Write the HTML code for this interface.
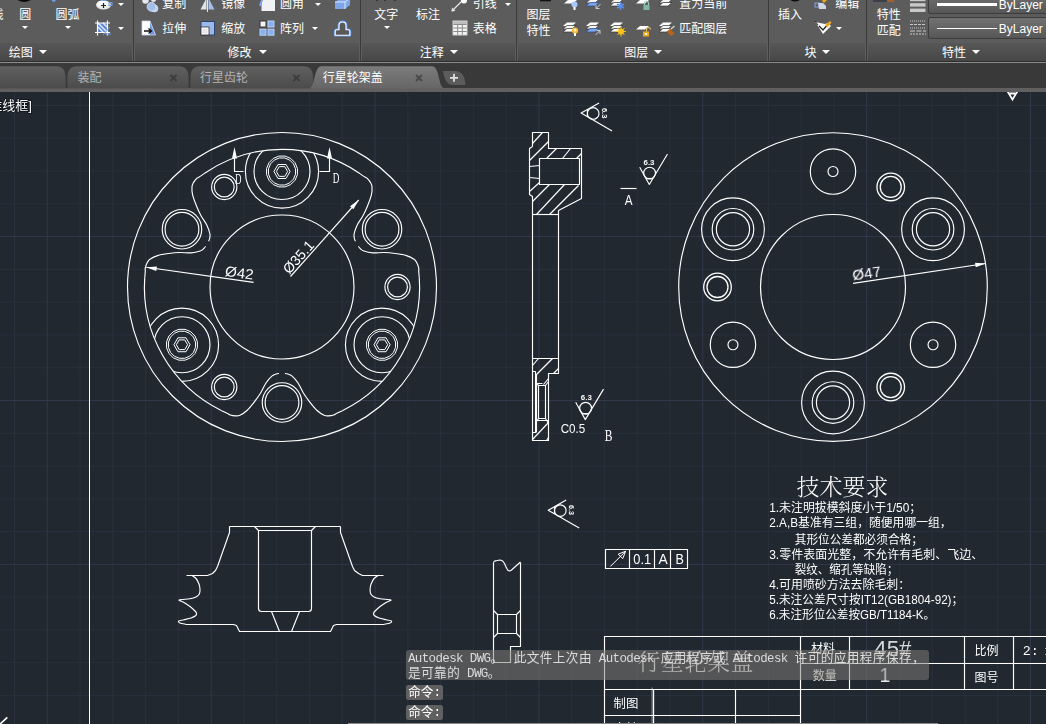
<!DOCTYPE html>
<html lang="zh"><head><meta charset="utf-8"><title>AutoCAD</title>
<style>
html,body{margin:0;padding:0;width:1046px;height:724px;overflow:hidden;background:#212830;font-family:"Liberation Sans","Noto Sans CJK SC",sans-serif}
#dwg{position:absolute;left:0;top:0}
#ribbon{position:absolute;left:0;top:0;width:1046px;height:62px;background:#5c5c5c;overflow:hidden}
#ribbon .ttl{position:absolute;left:0;top:43px;width:1046px;height:18px;background:linear-gradient(#575757,#474747)}
#ribbon .edge{position:absolute;left:0;top:61px;width:1046px;height:1px;background:#2e2e2e}
.t{position:absolute;color:#fff;font-size:12px;line-height:14px;white-space:nowrap}
.sep{position:absolute;top:0;width:1px;height:61px;background:#3a3a3a}
.sep:after{content:'';position:absolute;left:-1px;top:43px;width:3px;height:18px;border-left:1px solid #5f5f5f;border-right:1px solid #5f5f5f;box-sizing:border-box}
.ar{position:absolute;width:0;height:0;border-left:3px solid transparent;border-right:3px solid transparent;border-top:3.5px solid #fff}
#gap{position:absolute;left:0;top:62px;width:1046px;height:30px;background:#393939}
#gap .hl{position:absolute;left:0;top:0;width:1046px;height:1.3px;background:#8c8c8c}
#gap .base{position:absolute;left:0;top:26px;width:1046px;height:4px;background:#606060}
.tab{position:absolute;top:4px;height:22px;border-radius:9px 9px 0 0;background:linear-gradient(#5b5b5b,#4a4a4a);color:#b4b4b4;font-size:12px;line-height:22px}
.tab.on{background:#666;color:#fff}
.tab span{position:absolute;top:0}
.tab .x{font-size:10px;color:#8a8a8a;font-weight:bold}
.tab.on .x{color:#aaa}
.ico{position:absolute}
#cmd1{position:absolute;left:406px;top:650px;width:523px;height:29.5px;background:rgba(131,126,121,.53);border-radius:3px}
.cl{position:absolute;left:408px;color:#dcdcdc;font-family:"Liberation Mono","Noto Sans CJK SC",monospace;font-size:12.5px;letter-spacing:-0.63px;line-height:14px;white-space:pre}
.cl b{font-weight:normal;font-size:12.6px;letter-spacing:0.45px}
.cl i{margin-left:-3.6px}
.cp{position:absolute;left:406px;width:37px;height:14.8px;background:rgba(101,101,101,.93);border-radius:2.5px;color:#fff;font-family:"Liberation Mono","Noto Sans CJK SC",monospace;font-size:12.6px;line-height:14px}
.cp span{position:absolute;left:2.2px;top:1.2px}
#hscroll{position:absolute;left:347.5px;top:723px;width:590.5px;height:1px;background:#8a8a8a}
.dd{position:absolute;left:928px;width:130px;background:linear-gradient(#727272,#575757);border:1px solid #3c3c3c;border-radius:2px;box-shadow:inset 0 1px 0 #6c6c6c}
.dd .ln{position:absolute;left:8px;width:59.5px;background:#fff}
.ar2{position:absolute;width:0;height:0;border-left:4px solid transparent;border-right:4px solid transparent;border-top:4.2px solid #fff}

</style></head><body>
<svg id="dwg" width="1046" height="724" viewBox="0 0 1046 724">
<rect x="0" y="0" width="1046" height="724" fill="#212830"/>
<path d="M14.5 92V724M80.05 92V724M112.82 92V724M145.6 92V724M178.38 92V724M243.93 92V724M276.7 92V724M309.47 92V724M342.25 92V724M407.8 92V724M440.57 92V724M473.35 92V724M506.12 92V724M571.67 92V724M604.45 92V724M637.22 92V724M670 92V724M735.55 92V724M768.32 92V724M801.1 92V724M833.87 92V724M899.42 92V724M932.2 92V724M964.97 92V724M997.75 92V724M0 105.5H1046M0 138.28H1046M0 171.05H1046M0 203.83H1046M0 269.38H1046M0 302.15H1046M0 334.92H1046M0 367.7H1046M0 433.25H1046M0 466.02H1046M0 498.8H1046M0 531.57H1046M0 597.12H1046M0 629.9H1046M0 662.67H1046M0 695.45H1046" stroke="#29303d" stroke-width="1" fill="none"/>
<path d="M47.27 92V724M211.15 92V724M375.02 92V724M538.9 92V724M702.77 92V724M866.65 92V724M1030.52 92V724M0 236.6H1046M0 400.47H1046M0 564.35H1046" stroke="#31394b" stroke-width="1" fill="none"/>
<g fill="none" stroke="#fff" stroke-width="1.15" stroke-linecap="butt" stroke-linejoin="round">
<circle cx="282" cy="287" r="154.5"/>
<circle cx="282" cy="287" r="72"/>
<path d="M205.06 172.92C204.24 173.5 201.49 175.51 200.15 176.39C198.81 177.27 198.09 177.2 197 178.2C195.91 179.2 194.43 181.02 193.6 182.4C192.77 183.78 192.17 184.42 192 186.5C191.83 188.58 191.87 191.7 192.6 194.9C193.33 198.1 195.02 202.27 196.4 205.7C197.78 209.13 199.13 212.22 200.9 215.5C202.67 218.78 205.5 222.32 207 225.4C208.5 228.48 209.47 231.82 209.9 234C210.33 236.18 209.82 237.3 209.6 238.5C209.38 239.7 208.77 240.75 208.6 241.2"/>
<path d="M144.74 277.4C144.83 276.41 145.19 273.03 145.28 271.42C145.37 269.82 144.95 269.23 145.28 267.79C145.6 266.34 146.43 264.16 147.21 262.74C148 261.33 148.24 260.49 149.96 259.31C151.69 258.12 154.4 256.59 157.54 255.63C160.68 254.66 165.13 254.04 168.79 253.52C172.46 253 175.8 252.63 179.53 252.52C183.26 252.4 187.73 253.09 191.15 252.85C194.57 252.61 197.94 251.78 200.05 251.06C202.16 250.34 202.87 249.34 203.8 248.55C204.73 247.76 205.33 246.7 205.64 246.33"/>
<path d="M205.06 172.92A137.6 137.6 0 0 1 358.94 172.92"/>
<path d="M221.68 410.67C222.59 411.09 225.7 412.46 227.13 413.19C228.56 413.91 228.86 414.57 230.28 415.01C231.69 415.46 234 415.83 235.61 415.86C237.23 415.89 238.08 416.09 239.96 415.19C241.85 414.29 244.53 412.71 246.94 410.47C249.34 408.24 252.11 404.7 254.39 401.78C256.67 398.87 258.67 396.16 260.63 392.98C262.59 389.81 264.23 385.59 266.15 382.75C268.07 379.91 270.48 377.41 272.15 375.94C273.82 374.47 275.05 374.36 276.2 373.95C277.35 373.54 278.56 373.55 279.04 373.47"/>
<path d="M342.32 410.67C341.41 411.09 338.3 412.46 336.87 413.19C335.44 413.91 335.14 414.57 333.72 415.01C332.31 415.46 330 415.83 328.39 415.86C326.77 415.89 325.92 416.09 324.04 415.19C322.15 414.29 319.47 412.71 317.06 410.47C314.66 408.24 311.89 404.7 309.61 401.78C307.33 398.87 305.33 396.16 303.37 392.98C301.41 389.81 299.77 385.59 297.85 382.75C295.93 379.91 293.52 377.41 291.85 375.94C290.18 374.47 288.95 374.36 287.8 373.95C286.65 373.54 285.44 373.55 284.96 373.47"/>
<path d="M221.68 410.67A137.6 137.6 0 0 1 144.74 277.4"/>
<path d="M419.26 277.4C419.17 276.41 418.81 273.03 418.72 271.42C418.63 269.82 419.05 269.23 418.72 267.79C418.4 266.34 417.57 264.16 416.79 262.74C416 261.33 415.76 260.49 414.04 259.31C412.31 258.12 409.6 256.59 406.46 255.63C403.32 254.66 398.87 254.04 395.21 253.52C391.54 253 388.2 252.63 384.47 252.52C380.74 252.4 376.27 253.09 372.85 252.85C369.43 252.61 366.06 251.78 363.95 251.06C361.84 250.34 361.13 249.34 360.2 248.55C359.27 247.76 358.67 246.7 358.36 246.33"/>
<path d="M358.94 172.92C359.76 173.5 362.51 175.51 363.85 176.39C365.19 177.27 365.91 177.2 367 178.2C368.09 179.2 369.57 181.02 370.4 182.4C371.23 183.78 371.83 184.42 372 186.5C372.17 188.58 372.13 191.7 371.4 194.9C370.67 198.1 368.98 202.27 367.6 205.7C366.22 209.13 364.87 212.22 363.1 215.5C361.33 218.78 358.5 222.32 357 225.4C355.5 228.48 354.53 231.82 354.1 234C353.67 236.18 354.18 237.3 354.4 238.5C354.62 239.7 355.23 240.75 355.4 241.2"/>
<path d="M419.26 277.4A137.6 137.6 0 0 1 342.32 410.67"/>
<clipPath id="cf"><circle cx="282" cy="287" r="137.6"/></clipPath>
<g clip-path="url(#cf)">
<circle cx="282" cy="171.5" r="36.6"/>
<circle cx="282" cy="171.5" r="28"/>
<circle cx="181.97" cy="344.75" r="36.6"/>
<circle cx="181.97" cy="344.75" r="28"/>
<circle cx="382.03" cy="344.75" r="36.6"/>
<circle cx="382.03" cy="344.75" r="28"/>
</g>
<path d="M297.41 168.44L295.06 162.77L290.73 158.44L285.06 156.09L278.94 156.09L273.27 158.44L268.94 162.77L266.59 168.44L266.59 174.56L268.94 180.23L273.27 184.56L278.94 186.91L285.06 186.91L290.73 184.56L295.06 180.23L297.41 174.56Z" stroke-linejoin="round" stroke-width="1"/>
<path d="M295.51 168.81L293.45 163.85L289.65 160.05L284.69 157.99L279.31 157.99L274.35 160.05L270.55 163.85L268.49 168.81L268.49 174.19L270.55 179.15L274.35 182.95L279.31 185.01L284.69 185.01L289.65 182.95L293.45 179.15L295.51 174.19Z" stroke-linejoin="round" stroke-width="1"/>
<path d="M290.06 171.5L286.03 164.52L277.97 164.52L273.94 171.5L277.97 178.48L286.03 178.48Z" stroke-linejoin="round" stroke-width="1"/>
<path d="M287.62 171.5L284.81 166.63L279.19 166.63L276.38 171.5L279.19 176.37L284.81 176.37Z" stroke-linejoin="round" stroke-width="1"/>
<circle cx="382.03" cy="229.25" r="19.75"/>
<circle cx="382.03" cy="229.25" r="16.9"/>
<circle cx="397.5" cy="287" r="12.6"/>
<circle cx="397.5" cy="287" r="9.9"/>
<path d="M197.38 341.69L195.03 336.02L190.7 331.69L185.04 329.34L178.91 329.34L173.25 331.69L168.91 336.02L166.57 341.69L166.57 347.81L168.91 353.48L173.25 357.81L178.91 360.16L185.04 360.16L190.7 357.81L195.03 353.48L197.38 347.81Z" stroke-linejoin="round" stroke-width="1"/>
<path d="M195.48 342.06L193.42 337.1L189.62 333.3L184.66 331.24L179.29 331.24L174.32 333.3L170.52 337.1L168.47 342.06L168.47 347.44L170.52 352.4L174.32 356.2L179.29 358.26L184.66 358.26L189.62 356.2L193.42 352.4L195.48 347.44Z" stroke-linejoin="round" stroke-width="1"/>
<path d="M190.03 344.75L186 337.77L177.95 337.77L173.92 344.75L177.95 351.73L186 351.73Z" stroke-linejoin="round" stroke-width="1"/>
<path d="M187.59 344.75L184.78 339.88L179.17 339.88L176.36 344.75L179.17 349.62L184.78 349.62Z" stroke-linejoin="round" stroke-width="1"/>
<circle cx="181.97" cy="229.25" r="19.75"/>
<circle cx="181.97" cy="229.25" r="16.9"/>
<circle cx="224.25" cy="186.97" r="12.6"/>
<circle cx="224.25" cy="186.97" r="9.9"/>
<path d="M397.43 341.69L395.09 336.02L390.75 331.69L385.09 329.34L378.96 329.34L373.3 331.69L368.97 336.02L366.62 341.69L366.62 347.81L368.97 353.48L373.3 357.81L378.96 360.16L385.09 360.16L390.75 357.81L395.09 353.48L397.43 347.81Z" stroke-linejoin="round" stroke-width="1"/>
<path d="M395.53 342.06L393.48 337.1L389.68 333.3L384.71 331.24L379.34 331.24L374.38 333.3L370.58 337.1L368.52 342.06L368.52 347.44L370.58 352.4L374.38 356.2L379.34 358.26L384.71 358.26L389.68 356.2L393.48 352.4L395.53 347.44Z" stroke-linejoin="round" stroke-width="1"/>
<path d="M390.08 344.75L386.05 337.77L378 337.77L373.97 344.75L378 351.73L386.05 351.73Z" stroke-linejoin="round" stroke-width="1"/>
<path d="M387.64 344.75L384.83 339.88L379.22 339.88L376.41 344.75L379.22 349.62L384.83 349.62Z" stroke-linejoin="round" stroke-width="1"/>
<circle cx="282" cy="402.5" r="19.75"/>
<circle cx="282" cy="402.5" r="16.9"/>
<circle cx="224.25" cy="387.03" r="12.6"/>
<circle cx="224.25" cy="387.03" r="9.9"/>
<path d="M234.5 150.5V171.5H243.5"/>
<path d="M234.5 146.9L237 158.6L232 158.6Z" fill="#fff" stroke="none"/>
<path d="M329.5 150.5V171.5H319.5"/>
<path d="M329.5 146.9L332 158.6L327 158.6Z" fill="#fff" stroke="none"/>
<path d="M146.2 267.3L253.6 282.4"/>
<path d="M146.2 267.3L156.92 266.48L156.28 271.04Z" fill="#fff" stroke="none"/>
<path d="M358.7 200L290.5 276.5"/>
<path d="M358.7 200L353.43 209.37L350 206.31Z" fill="#fff" stroke="none"/>
<circle cx="833" cy="287" r="154.3"/>
<circle cx="833" cy="287" r="72.5"/>
<circle cx="833" cy="171.5" r="22.7"/>
<circle cx="833" cy="171.5" r="5"/>
<circle cx="933.03" cy="229.25" r="31.4"/>
<circle cx="933.03" cy="229.25" r="20.8"/>
<circle cx="933.03" cy="229.25" r="16.6"/>
<circle cx="890.75" cy="186.97" r="13.8" stroke-width="1.3"/>
<circle cx="890.75" cy="186.97" r="10.5" stroke-width="1.3"/>
<circle cx="732.97" cy="344.75" r="22.7"/>
<circle cx="732.97" cy="344.75" r="5"/>
<circle cx="732.97" cy="229.25" r="31.4"/>
<circle cx="732.97" cy="229.25" r="20.8"/>
<circle cx="732.97" cy="229.25" r="16.6"/>
<circle cx="717.5" cy="287" r="13.8" stroke-width="1.3"/>
<circle cx="717.5" cy="287" r="10.5" stroke-width="1.3"/>
<circle cx="933.03" cy="344.75" r="22.7"/>
<circle cx="933.03" cy="344.75" r="5"/>
<circle cx="833" cy="402.5" r="31.4"/>
<circle cx="833" cy="402.5" r="20.8"/>
<circle cx="833" cy="402.5" r="16.6"/>
<circle cx="890.75" cy="387.03" r="13.8" stroke-width="1.3"/>
<circle cx="890.75" cy="387.03" r="10.5" stroke-width="1.3"/>
<path d="M985.8 263.5L853 283.4"/>
<path d="M985.8 263.5L975.76 267.33L975.08 262.78Z" fill="#fff" stroke="none"/>
<path d="M532.5 146.5V132.5H548.5V148.5H581.5V198.5L558.5 210.5V358.5"/>
<path d="M532.5 146.5L529.5 148.5V194.5L532.5 196.5V440.5H548.5V373.5H558.5V358.5H532.5"/>
<path d="M532.5 214.5L558.5 214.5"/>
<path d="M539.5 158.5H579.5V184.5H539.5Z"/>
<path d="M576.5 158.5L581.5 153.5"/>
<path d="M529.5 166.5L539.5 165.5"/>
<path d="M529.5 177.5L539.5 178.5"/>
<path d="M532.5 143.5L542.5 132.5"/>
<path d="M529.5 160.5L548.5 141.5"/>
<path d="M546.5 158.5L556.5 148.5"/>
<path d="M562.5 158.5L570.5 148.5"/>
<path d="M529.5 191.5L539.5 182.5"/>
<path d="M532.5 201.5L549.5 184.5"/>
<path d="M536.5 214.5L564.5 184.5"/>
<path d="M549.5 214.5L578.5 185.5"/>
<path d="M532.5 371.5H535.5V432.5H532.5"/>
<path d="M536.5 374.5V432.5"/>
<path d="M538.5 385.5H545.5V418.5H538.5Z"/>
<path d="M536.5 383.5L538.5 385.5M548.5 381.5L545.5 385.5M536.5 383.5H542.5"/>
<path d="M536.5 421.5L538.5 418.5M548.5 423.5L545.5 418.5M536.5 420.5H548.5"/>
<path d="M532.5 365.5L538.5 358.5"/>
<path d="M535.5 375.5L552.5 358.5"/>
<path d="M543.5 384.5L548.5 378.5"/>
<path d="M553.5 373.5L558.5 368.5"/>
<path d="M532.5 439.5L548.5 422.5"/>
<path d="M546.5 440.5L548.5 437.5"/>
<path d="M620.5 188.5L636.5 188.5"/>
<path d="M639.7 167.2L649.3 184.5L667.5 154"/>
<circle cx="649.6" cy="173.1" r="5.9"/>
<path d="M646.1 178.5L652.7 178.5"/>
<path d="M575.7 402.3L585.3 419.6L603.5 389.1"/>
<circle cx="585.6" cy="408.2" r="5.9"/>
<path d="M582.1 413.6L588.7 413.6"/>
<path d="M599.1 102.9L581.1 113.1L612.1 130.9"/>
<circle cx="593.2" cy="113.4" r="5.8"/>
<path d="M587.4 109.5L587.4 116.7"/>
<path d="M566.2 500.1L548.2 510.3L579.2 528.1"/>
<circle cx="560.3" cy="510.6" r="5.8"/>
<path d="M554.5 506.7L554.5 513.9"/>
<path d="M605.5 549.5H687.5V568.5H605.5Z"/>
<path d="M629.5 549.5L629.5 568.5"/>
<path d="M654.5 549.5L654.5 568.5"/>
<path d="M670.5 549.5L670.5 568.5"/>
<path d="M610.3 566.5L625.6 551.2M625.6 551.2L618.2 554.2L622.8 558.6Z" stroke-width="1"/>
<path d="M229.5 526.5L229.5 532.5L217.5 566.5L215.5 570.5L212.5 573.5L207.5 575.5L186.5 575.5"/>
<path d="M340.5 526.5L340.5 532.5L352.5 566.5L354.5 570.5L358.5 573.5L362.5 575.5L383.5 575.5"/>
<path d="M229.5 526.5L340.5 526.5"/>
<path d="M191.5 575.3C192.25 575.83 194.75 577.05 196 578.5C197.25 579.95 198.33 582.17 199 584C199.67 585.83 199.95 587.83 200 589.5C200.05 591.17 199.97 592.75 199.3 594C198.63 595.25 197.55 596.2 196 597C194.45 597.8 192.8 598.32 190 598.8C187.2 599.28 180.2 599.28 179.2 599.9C178.2 600.52 182.2 601.4 184 602.5C185.8 603.6 188.17 605.08 190 606.5C191.83 607.92 193.9 609.83 195 611C196.1 612.17 196.52 612.7 196.6 613.5C196.68 614.3 196.43 615.05 195.5 615.8C194.57 616.55 192.92 617.33 191 618C189.08 618.67 186.05 619.3 184 619.8C181.95 620.3 179.37 620.47 178.7 621C178.03 621.53 178.8 622.45 180 623C181.2 623.55 184.92 624.08 185.9 624.3"/>
<path d="M378.6 575.3C377.85 575.83 375.35 577.05 374.1 578.5C372.85 579.95 371.77 582.17 371.1 584C370.43 585.83 370.15 587.83 370.1 589.5C370.05 591.17 370.13 592.75 370.8 594C371.47 595.25 372.55 596.2 374.1 597C375.65 597.8 377.3 598.32 380.1 598.8C382.9 599.28 389.9 599.28 390.9 599.9C391.9 600.52 387.9 601.4 386.1 602.5C384.3 603.6 381.93 605.08 380.1 606.5C378.27 607.92 376.2 609.83 375.1 611C374 612.17 373.58 612.7 373.5 613.5C373.42 614.3 373.67 615.05 374.6 615.8C375.53 616.55 377.18 617.33 379.1 618C381.02 618.67 384.05 619.3 386.1 619.8C388.15 620.3 390.73 620.47 391.4 621C392.07 621.53 391.3 622.45 390.1 623C388.9 623.55 385.18 624.08 384.2 624.3"/>
<path d="M185.5 624.5L233.5 624.5L236.5 625.5L239.5 631.5L330.5 631.5L333.5 625.5L336.5 624.5L384.5 624.5"/>
<path d="M254.5 526.5L258.5 530.5H311.5L315.5 526.5"/>
<path d="M258.5 530.5V608.5Q258.5 611.5 261.5 611.5H308.5Q311.5 611.5 311.5 608.5V530.5"/>
<path d="M271.5 611.5L279.5 631.5M299.5 611.5L291.5 631.5"/>
<path d="M493.5 562.5V662.5H510.5V646.5H520.5V562.5"/>
<path d="M497.5 614.5H516.5V633.5H497.5Z"/>
<path d="M493.5 610.5L497.5 614.5M520.5 610.5L516.5 614.5M493.5 637.5L497.5 633.5M520.5 637.5L516.5 633.5"/>
<path d="M493.5 562.5C493.62 562.32 493.8 561.68 494.2 561.4C494.6 561.12 495.18 561 495.9 560.8C496.62 560.6 497.63 560.28 498.5 560.2C499.37 560.12 500.32 560.07 501.1 560.3C501.88 560.53 502.58 560.95 503.2 561.6C503.82 562.25 504.28 563.22 504.8 564.2C505.32 565.18 505.83 566.57 506.3 567.5C506.77 568.43 507.17 569.27 507.6 569.8C508.03 570.33 508.47 570.55 508.9 570.7C509.33 570.85 509.77 570.82 510.2 570.7C510.63 570.58 511.28 570.12 511.5 570L520.5 562"/>
<path d="M1046 636.5H604.5V724"/>
<path d="M604.5 689.5L1046 689.5"/>
<path d="M800.5 663.5L1046 663.5"/>
<path d="M800.5 636.5L800.5 724"/>
<path d="M849.5 636.5L849.5 689.5"/>
<path d="M964.5 636.5L964.5 689.5"/>
<path d="M1013.5 636.5L1013.5 689.5"/>
<path d="M653.6 689.5L653.6 724"/>
<path d="M652.2 687.5L652.2 724" stroke-width="1.6" opacity=".35"/>
<path d="M735.5 689.5L735.5 724"/>
<path d="M604.5 715.5L800.5 715.5"/>
<rect x="89" y="92" width="1" height="632" fill="#fff" stroke="none"/>
<path d="M-1 725L7.3 717.3" stroke-width="1.7"/>
<path d="M1007.3 91L1012.5 99.6L1017.6 91M1009.8 93.5H1015.2" stroke-width="1.8" stroke-linejoin="miter"/>
</g>
<g fill="#fff" stroke="none" opacity="0.999">
<text x="32" y="109.7" font-size="13" font-family="Liberation Sans,Noto Sans CJK SC,sans-serif" text-anchor="end" stroke="#10141a" stroke-width="1.6" paint-order="stroke" stroke-linejoin="round">[-][俯视][二维线框]</text>
<text x="235.2" y="183.9" font-size="15" font-family="Liberation Serif,Noto Serif CJK SC,serif" textLength="6.2" lengthAdjust="spacingAndGlyphs" >D</text>
<text x="332.8" y="183.2" font-size="15" font-family="Liberation Serif,Noto Serif CJK SC,serif" textLength="6.6" lengthAdjust="spacingAndGlyphs" >D</text>
<text x="624.8" y="205" font-size="14.6" font-family="Liberation Sans,Noto Sans CJK SC,sans-serif" textLength="7.8" lengthAdjust="spacingAndGlyphs" >A</text>
<text x="604.8" y="441.1" font-size="17.3" font-family="Liberation Serif,Noto Serif CJK SC,serif" textLength="7.7" lengthAdjust="spacingAndGlyphs" >B</text>
<text x="560.7" y="432.8" font-size="12.2" font-family="Liberation Sans,Noto Sans CJK SC,sans-serif" textLength="24.6" lengthAdjust="spacingAndGlyphs" >C0.5</text>
<text x="643.5" y="164.6" font-size="7.5" font-family="Liberation Sans,Noto Sans CJK SC,sans-serif" font-weight="bold" textLength="11" lengthAdjust="spacingAndGlyphs">6.3</text>
<text x="580.8" y="399.5" font-size="7.5" font-family="Liberation Sans,Noto Sans CJK SC,sans-serif" font-weight="bold" textLength="11" lengthAdjust="spacingAndGlyphs">6.3</text>
<text transform="translate(601.7,107.9) rotate(90)" font-weight="bold" font-size="7" font-family="Liberation Sans,Noto Sans CJK SC,sans-serif" textLength="10.5" lengthAdjust="spacingAndGlyphs">6.3</text>
<text transform="translate(568.9,505) rotate(90)" font-weight="bold" font-size="7" font-family="Liberation Sans,Noto Sans CJK SC,sans-serif" textLength="10" lengthAdjust="spacingAndGlyphs">6.3</text>
<text transform="translate(224.6,275.8) rotate(8)" font-size="14.3" font-family="Liberation Sans,Noto Sans CJK SC,sans-serif" textLength="28.6" lengthAdjust="spacingAndGlyphs">Ø42</text>
<text transform="translate(289.3,274.7) rotate(-48.3)" font-size="14.3" font-family="Liberation Sans,Noto Sans CJK SC,sans-serif" textLength="38.5" lengthAdjust="spacingAndGlyphs">Ø35.1</text>
<text transform="translate(853.2,280.5) rotate(-8.5)" font-size="14.3" font-family="Liberation Sans,Noto Sans CJK SC,sans-serif" textLength="28.6" lengthAdjust="spacingAndGlyphs">Ø47</text>
<text x="633.3" y="564.4" font-size="13.8" font-family="Liberation Sans,Noto Sans CJK SC,sans-serif" textLength="17.8" lengthAdjust="spacingAndGlyphs" >0.1</text>
<text x="658.6" y="564.4" font-size="13.8" font-family="Liberation Sans,Noto Sans CJK SC,sans-serif" textLength="9.2" lengthAdjust="spacingAndGlyphs" >A</text>
<text x="675.6" y="564.4" font-size="13.8" font-family="Liberation Sans,Noto Sans CJK SC,sans-serif" textLength="8.4" lengthAdjust="spacingAndGlyphs" >B</text>
<text x="796.6" y="495" font-size="23" font-family="Liberation Serif,Noto Serif CJK SC,serif" textLength="92" lengthAdjust="spacingAndGlyphs" font-weight="300">技术要求</text>
<text x="769.2" y="512.2" font-size="12" font-family="Liberation Sans,Noto Sans CJK SC,sans-serif" textLength="152.0" lengthAdjust="spacingAndGlyphs" font-weight="400">1.未注明拔模斜度小于1/50；</text>
<text x="769.2" y="527.2" font-size="12" font-family="Liberation Sans,Noto Sans CJK SC,sans-serif" textLength="182.5" lengthAdjust="spacingAndGlyphs" font-weight="400">2.A,B基准有三组，随便用哪一组，</text>
<text x="794.8" y="543.6" font-size="12" font-family="Liberation Sans,Noto Sans CJK SC,sans-serif" textLength="128.0" lengthAdjust="spacingAndGlyphs" font-weight="400">其形位公差都必须合格；</text>
<text x="769.2" y="558.7" font-size="12" font-family="Liberation Sans,Noto Sans CJK SC,sans-serif" textLength="214.0" lengthAdjust="spacingAndGlyphs" font-weight="400">3.零件表面光整，不允许有毛刺、飞边、</text>
<text x="794.8" y="573.7" font-size="12" font-family="Liberation Sans,Noto Sans CJK SC,sans-serif" textLength="103.5" lengthAdjust="spacingAndGlyphs" font-weight="400">裂纹、缩孔等缺陷；</text>
<text x="769.2" y="589.0" font-size="12" font-family="Liberation Sans,Noto Sans CJK SC,sans-serif" textLength="141.0" lengthAdjust="spacingAndGlyphs" font-weight="400">4.可用喷砂方法去除毛刺：</text>
<text x="769.2" y="603.9" font-size="12" font-family="Liberation Sans,Noto Sans CJK SC,sans-serif" textLength="194.0" lengthAdjust="spacingAndGlyphs" font-weight="400">5.未注公差尺寸按IT12(GB1804-92)；</text>
<text x="769.2" y="618.9" font-size="12" font-family="Liberation Sans,Noto Sans CJK SC,sans-serif" textLength="166.0" lengthAdjust="spacingAndGlyphs" font-weight="400">6.未注形位公差按GB/T1184-K。</text>
<text x="637.8" y="670" font-size="22.5" font-family="Liberation Serif,Noto Serif CJK SC,serif" font-weight="300" textLength="115.5" lengthAdjust="spacing" opacity=".92">行星轮架盖</text>
<text x="811" y="653.2" font-size="12" font-family="Liberation Sans,Noto Sans CJK SC,sans-serif">材料</text>
<text x="812.8" y="680.4" font-size="12" font-family="Liberation Sans,Noto Sans CJK SC,sans-serif">数量</text>
<text x="874.3" y="656.4" font-size="21.5" font-family="Liberation Sans,Noto Sans CJK SC,sans-serif" textLength="37" lengthAdjust="spacingAndGlyphs" font-weight="300" opacity=".82">45#</text>
<text x="879.5" y="682.2" font-size="19.5" font-family="Liberation Sans,Noto Sans CJK SC,sans-serif" opacity=".9">1</text>
<text x="974.6" y="654.8" font-size="12" font-family="Liberation Sans,Noto Sans CJK SC,sans-serif">比例</text>
<text x="974.6" y="681.8" font-size="12" font-family="Liberation Sans,Noto Sans CJK SC,sans-serif">图号</text>
<text x="1022.8" y="655.2" font-size="13.4" font-family="Liberation Mono,Noto Sans CJK SC,monospace">2:</text>
<text x="1044.4" y="655.2" font-size="13.4" font-family="Liberation Mono,Noto Sans CJK SC,monospace">1</text>
<text x="613.6" y="708.2" font-size="12.4" font-family="Liberation Sans,Noto Sans CJK SC,sans-serif">制图</text>
<text x="613.6" y="733.4" font-size="12.4" font-family="Liberation Sans,Noto Sans CJK SC,sans-serif">审核</text>
</g>
</svg>
<div id="ribbon"><div class="ttl"></div><div class="edge"></div>
<div class="t" style="left:-20.5px;top:7.9px">直线</div>
<div class="t" style="left:19.2px;top:7.9px">圆</div>
<div class="ar" style="left:22.4px;top:25.8px"></div>
<div class="t" style="left:55.4px;top:7.9px">圆弧</div>
<div class="ar" style="left:64.5px;top:25.8px"></div>
<svg class="ico" style="left:18px;top:0px" width="16" height="3" viewBox="0 0 16 3"><ellipse cx="6.2" cy="-3" rx="8" ry="5" fill="#0c0c0c"/></svg>
<svg class="ico" style="left:51px;top:0px" width="6" height="2" viewBox="0 0 6 2"><rect x="1" y="0" width="3.5" height="1.5" fill="#6aa2ee"/></svg>
<svg class="ico" style="left:95px;top:-3px" width="18" height="14" viewBox="0 0 18 14"><ellipse cx="8.5" cy="8" rx="7.5" ry="4.6" fill="#e8e8e8"/><ellipse cx="8" cy="6.6" rx="6" ry="3" fill="#fff"/><path d="M6 8.5h5M8.5 6v5" stroke="#222" stroke-width="1.2"/><rect x="14" y="5.5" width="3" height="3" fill="none" stroke="#6aa2ee" stroke-width="1"/><rect x="7" y="2" width="3" height="2" fill="#6aa2ee"/></svg>
<div class="ar" style="left:117.7px;top:3.2px"></div>
<svg class="ico" style="left:94px;top:19px" width="18" height="18" viewBox="0 0 18 18"><rect x="4" y="4" width="9" height="9" fill="#5b86d6"/><path d="M4 8l5 5M4 4l9 9M9 4l4 4" stroke="#dfe8fa" stroke-width="1.6"/><path d="M3.5 1.5v15M13.5 1.5v15M1 4h15M1 13.5h15" stroke="#fff" stroke-width="1.2" fill="none"/><path d="M9 16l7-8M11 15h6" stroke="#6aa2ee" stroke-width="1" fill="none"/></svg>
<div class="ar" style="left:117.7px;top:26.7px"></div>
<div class="t" style="left:8.8px;top:45.5px">绘图</div>
<div class="ar2" style="left:39px;top:50.3px"></div>
<div class="sep" style="left:133px"></div>
<svg class="ico" style="left:140px;top:-4px" width="20" height="18" viewBox="0 0 20 18"><circle cx="5.5" cy="4.5" r="3.2" fill="#e4e8f0"/><circle cx="13.5" cy="3.5" r="2.5" fill="#e4e8f0"/><circle cx="14.5" cy="12.5" r="3.8" fill="#c4d4ee"/><circle cx="11.5" cy="10.8" r="4.4" fill="#a3c0ec" stroke="#dbe6f8" stroke-width=".8"/></svg>
<div class="t" style="left:162.3px;top:-3px">复制</div>
<svg class="ico" style="left:199px;top:-4px" width="18" height="16" viewBox="0 0 18 16"><path d="M8.5 0v16" stroke="#e8e8e8" stroke-width="1"/><path d="M7.5 2v11.5H1.5z" fill="#dfe3ea"/><path d="M9.5 2v11.5h6z" fill="#a3c0ec"/></svg>
<div class="t" style="left:221.2px;top:-3px">镜像</div>
<svg class="ico" style="left:259px;top:-4px" width="18" height="16" viewBox="0 0 18 16"><path d="M2.5 15V8Q3.5 1 12 0H16V15z" fill="#f0f1f5"/><path d="M1 10Q2 2 9 -1" fill="none" stroke="#7fa8ee" stroke-width="1.6"/></svg>
<div class="t" style="left:280px;top:-3px">圆角</div>
<div class="ar" style="left:315.4px;top:3.2px"></div>
<svg class="ico" style="left:334px;top:-4px" width="17" height="14" viewBox="0 0 17 14"><path d="M1 6l6-4h9v7l-5 4H1z" fill="#7ea6e6"/><path d="M1 6h10v7M11 6l5-4" stroke="#dfe8fa" stroke-width="1" fill="none"/></svg>
<svg class="ico" style="left:141px;top:20px" width="17" height="17" viewBox="0 0 17 17"><path d="M1 1H9L14.5 15H1z" fill="#fff"/><path d="M9 1L14.5 15H9z" fill="#6f96da"/><path d="M3 11h7M7.5 8.5L10.5 11 7.5 13.5" stroke="#111" stroke-width="1.4" fill="none"/><path d="M1 1H9L14.5 15H1z" fill="none" stroke="#c8d4ec" stroke-width=".8"/></svg>
<div class="t" style="left:162.3px;top:22px">拉伸</div>
<svg class="ico" style="left:200px;top:20px" width="16" height="16" viewBox="0 0 16 16"><rect x="1" y="1.5" width="13.5" height="13.5" fill="#9ab8ec" stroke="#2f436f" stroke-width="1"/><rect x="1" y="7" width="8" height="8" fill="#fff" stroke="#333" stroke-width=".8"/><rect x="2.5" y="8.5" width="5" height="5" fill="#e6e6e6"/></svg>
<div class="t" style="left:221.2px;top:22px">缩放</div>
<svg class="ico" style="left:258px;top:19px" width="19" height="18" viewBox="0 0 19 18"><g fill="#86b0f0" stroke="#b9d0f6" stroke-width="1"><rect x="10" y="2" width="6" height="6"/><rect x="2" y="10.2" width="6" height="6"/><rect x="10" y="10.2" width="6" height="6"/></g><rect x="2" y="2" width="6" height="6" fill="#f4f4f4" stroke="#333" stroke-width="1"/></svg>
<div class="t" style="left:280px;top:22px">阵列</div>
<div class="ar" style="left:311.6px;top:26.7px"></div>
<svg class="ico" style="left:333px;top:20px" width="19" height="17" viewBox="0 0 19 17"><path d="M2.2 15.2V11.6Q2.2 9.8 4 9.8H6V5.5Q6 2 9.5 2Q13 2 13 5.5V9.8H15Q16.8 9.8 16.8 11.6V15.2Z" fill="none" stroke="#5b97f5" stroke-width="2.8" stroke-linejoin="round"/><path d="M2.2 15.2V11.6Q2.2 9.8 4 9.8H6V5.5Q6 2 9.5 2Q13 2 13 5.5V9.8H15Q16.8 9.8 16.8 11.6V15.2Z" fill="#595959" stroke="#fff" stroke-width="1.1" stroke-linejoin="round"/></svg>
<div class="t" style="left:227.5px;top:45.5px">修改</div>
<div class="ar2" style="left:258.5px;top:50.3px"></div>
<div class="sep" style="left:360px"></div>
<svg class="ico" style="left:372px;top:0px" width="30" height="2" viewBox="0 0 30 2"><rect x="4" y="0" width="2" height=".8" fill="#2a2a2a"/><rect x="12" y="0" width="2" height=".8" fill="#2a2a2a"/><rect x="22" y="0" width="2" height=".8" fill="#2a2a2a"/></svg>
<div class="t" style="left:374.2px;top:8px">文字</div>
<div class="ar" style="left:383.5px;top:25.7px"></div>
<div class="t" style="left:416px;top:8px">标注</div>
<svg class="ico" style="left:450px;top:-4px" width="18" height="17" viewBox="0 0 18 17"><path d="M2 15L12 5" stroke="#e6e6e6" stroke-width="1.3"/><path d="M1.5 15.5L2 11.5 5.5 15z" fill="#e6e6e6"/><circle cx="14" cy="4.5" r="3" fill="#fff"/></svg>
<div class="t" style="left:472.8px;top:-3px">引线</div>
<div class="ar" style="left:504.5px;top:3.2px"></div>
<svg class="ico" style="left:452px;top:20px" width="16" height="16" viewBox="0 0 16 16"><rect x="1" y="1" width="14" height="14" fill="#f4f4f4"/><rect x="1" y="1" width="14" height="3.5" fill="#bdbdbd"/><path d="M1 4.5h14M1 8h14M1 11.5h14M5.7 4.5v10.5M10.3 4.5v10.5" stroke="#8a8a8a" stroke-width="1"/><rect x="1" y="1" width="14" height="14" fill="none" stroke="#d0d0d0"/></svg>
<div class="t" style="left:472.8px;top:22px">表格</div>
<div class="t" style="left:419.8px;top:45.5px">注释</div>
<div class="ar2" style="left:449.6px;top:50.3px"></div>
<div class="sep" style="left:516px"></div>
<svg class="ico" style="left:539px;top:0px" width="14" height="2" viewBox="0 0 14 2"><rect x="1" y="0" width="11" height="1.3" fill="#111"/></svg>
<div class="t" style="left:526.5px;top:8px">图层</div>
<div class="t" style="left:526.5px;top:24.3px">特性</div>
<svg class="ico" style="left:562px;top:-6.5px" width="18" height="18" viewBox="0 0 18 18"><path d="M6 6H15L11 9.5H2z" fill="#fff"/><circle cx="12.5" cy="10.5" r="3" fill="#a8c8ff"/><rect x="11.5" y="13" width="2" height="3" fill="#fff"/></svg>
<svg class="ico" style="left:585px;top:-6.5px" width="18" height="18" viewBox="0 0 18 18"><path d="M5 2.5H14L10 6H1z" fill="#fff"/><path d="M5 5.5H14L10 9H1z" fill="#f4f4f4" stroke="#333" stroke-width=".7"/><path d="M5 8.5H14L10 12H1z" fill="#7ea6e6" stroke="#2c4f97" stroke-width=".7"/><path d="M15.5 10L11 14.5M11 11v3.5h3.5" stroke="#ccc" stroke-width="1" fill="none"/></svg>
<svg class="ico" style="left:609px;top:-6.5px" width="18" height="18" viewBox="0 0 18 18"><path d="M5 2.5H14L10 6H1z" fill="#fff"/><path d="M5 5.5H14L10 9H1z" fill="#f4f4f4" stroke="#333" stroke-width=".7"/><path d="M5 8.5H14L10 12H1z" fill="#fff" stroke="#333" stroke-width=".7"/><path d="M11.5 8v8M8 10l7 4M8 14l7-4" stroke="#5d8fe8" stroke-width="1.6"/></svg>
<svg class="ico" style="left:634px;top:-6.5px" width="18" height="18" viewBox="0 0 18 18"><path d="M6 6H15L11 9.5H2z" fill="#fff"/><rect x="9.5" y="11" width="6" height="5" fill="#7fb7a8"/><path d="M10.5 11V9.3a2 2 0 0 1 4 0V11" stroke="#9fd0c0" fill="none" stroke-width="1.1"/></svg>
<svg class="ico" style="left:658px;top:-6.5px" width="18" height="18" viewBox="0 0 18 18"><path d="M5 2.5H14L10 6H1z" fill="#fff"/><path d="M5 5.5H14L10 9H1z" fill="#f4f4f4" stroke="#333" stroke-width=".7"/><path d="M5 8.5H14L10 12H1z" fill="#fff" stroke="#333" stroke-width=".7"/><path d="M4 0H13L9 3.5H0z" fill="#7ea6e6"/></svg>
<svg class="ico" style="left:562px;top:19.8px" width="18" height="18" viewBox="0 0 18 18"><path d="M5 2.5H14L10 6H1z" fill="#fff"/><path d="M5 5.5H14L10 9H1z" fill="#f4f4f4" stroke="#333" stroke-width=".7"/><path d="M5 8.5H14L10 12H1z" fill="#fff" stroke="#333" stroke-width=".7"/><circle cx="13" cy="10.5" r="3.1" fill="#ffb52e"/><circle cx="13" cy="10" r="1.5" fill="#fff3c0"/><rect x="12" y="13" width="2" height="3" fill="#fff"/></svg>
<svg class="ico" style="left:585px;top:19.8px" width="18" height="18" viewBox="0 0 18 18"><path d="M5 2.5H14L10 6H1z" fill="#fff"/><path d="M5 5.5H14L10 9H1z" fill="#f4f4f4" stroke="#333" stroke-width=".7"/><path d="M5 8.5H14L10 12H1z" fill="#7ea6e6" stroke="#2c4f97" stroke-width=".7"/><path d="M10.5 15L15 10.5M11.5 10.5H15V14" stroke="#ccc" stroke-width="1" fill="none"/></svg>
<svg class="ico" style="left:609px;top:19.8px" width="18" height="18" viewBox="0 0 18 18"><path d="M5 2.5H14L10 6H1z" fill="#fff"/><path d="M5 5.5H14L10 9H1z" fill="#f4f4f4" stroke="#333" stroke-width=".7"/><path d="M5 8.5H14L10 12H1z" fill="#fff" stroke="#333" stroke-width=".7"/><circle cx="12" cy="11.5" r="3" fill="#ffc21a"/><path d="M12 6.5v10M7 11.5h10M8.5 8l7 7M8.5 15l7-7" stroke="#ffc21a" stroke-width="1"/></svg>
<svg class="ico" style="left:634px;top:19.8px" width="18" height="18" viewBox="0 0 18 18"><path d="M6 6H15L11 9.5H2z" fill="#fff"/><rect x="9" y="11.5" width="6" height="5" fill="#f0a81c"/><path d="M12.5 11.5V9.5a2 2 0 0 1 4 0" stroke="#f0c060" fill="none" stroke-width="1.1"/><rect x="11" y="13" width="2" height="2" fill="#fff"/></svg>
<svg class="ico" style="left:658px;top:19.8px" width="18" height="18" viewBox="0 0 18 18"><path d="M5 2.5H14L10 6H1z" fill="#fff"/><path d="M5 5.5H14L10 9H1z" fill="#f4f4f4" stroke="#333" stroke-width=".7"/><path d="M5 8.5H14L10 12H1z" fill="#fff" stroke="#333" stroke-width=".7"/><path d="M8.5 11.5L13 16 16.5 13.5 12 9z" fill="#b8651b"/><path d="M13 9l3.5-3" stroke="#ddd" stroke-width="1.2"/></svg>
<div class="t" style="left:679.3px;top:-3px">置为当前</div>
<div class="t" style="left:679.3px;top:22px">匹配图层</div>
<div class="t" style="left:624.2px;top:45.5px">图层</div>
<div class="ar2" style="left:654px;top:50.3px"></div>
<div class="sep" style="left:768px"></div>
<div class="t" style="left:778px;top:8.3px">插入</div>
<svg class="ico" style="left:788px;top:0px" width="14" height="3" viewBox="0 0 14 3"><ellipse cx="7" cy="-2" rx="5.5" ry="3.6" fill="#0c0c0c"/></svg>
<svg class="ico" style="left:813px;top:-5px" width="18" height="16" viewBox="0 0 18 16"><path d="M9 6L15 0l2 2-6 6z" fill="#f0a81c"/><rect x="2" y="8" width="4" height="4" fill="none" stroke="#7ea6e6"/><path d="M5 8h5l3 3v3H6z" fill="#cfd6e6"/></svg>
<div class="t" style="left:835.2px;top:-3px">编辑</div>
<svg class="ico" style="left:814px;top:20px" width="19" height="16" viewBox="0 0 19 16"><path d="M1 2l3 4 5 8 8-8-3-3-3 1z" fill="#fff"/><path d="M5 6l4 4 6-7" stroke="#222" stroke-width="1.3" fill="none"/><path d="M11 5l5-4 1.5 1.5-4 5z" fill="#f0a81c"/><path d="M1 1l3 4" stroke="#222"/></svg>
<div class="ar" style="left:836.4px;top:26.7px"></div>
<div class="t" style="left:804.6px;top:45.5px">块</div>
<div class="ar2" style="left:821.8px;top:50.3px"></div>
<div class="sep" style="left:866px"></div>
<svg class="ico" style="left:872px;top:0px" width="24" height="3" viewBox="0 0 24 3"><rect x="1" y="0" width="14" height="2" fill="#3a3f4a"/><rect x="15" y="0" width="7" height="2" fill="#a5602a"/></svg>
<div class="t" style="left:876.7px;top:8.3px">特性</div>
<div class="t" style="left:876.7px;top:24.3px">匹配</div>
<svg class="ico" style="left:910px;top:0px" width="16" height="13" viewBox="0 0 16 13"><rect x="0" y="-2" width="15.5" height="3.2" fill="#c9c9c9"/><rect x="0" y="3.2" width="15.5" height="3.4" fill="#c9c9c9"/><rect x="0" y="8.6" width="15.5" height="3.4" fill="#c9c9c9"/></svg>
<svg class="ico" style="left:910px;top:20px" width="16" height="15" viewBox="0 0 16 15"><path d="M0 1h16" stroke="#c9c9c9" stroke-width="1" stroke-dasharray="1 1"/><path d="M0 4.5h16" stroke="#c9c9c9" stroke-width="1" stroke-dasharray="3 1"/><path d="M0 8h16" stroke="#c9c9c9" stroke-width="1" stroke-dasharray="1 1"/><path d="M0 11h16" stroke="#c9c9c9" stroke-width="1" stroke-dasharray="5 1.5"/><path d="M0 14h16" stroke="#c9c9c9" stroke-width="1" stroke-dasharray="2 1"/></svg>
<div class="dd" style="top:-8px;height:20px"><div class="ln" style="top:10px;height:3px"></div><div class="t" style="left:69.8px;top:5px;font-size:12px;line-height:15px">ByLayer</div></div>
<div class="dd" style="top:17px;height:19.5px"><div class="ln" style="top:9.6px;height:1.5px"></div><div class="t" style="left:69.8px;top:3.6px;font-size:12px;line-height:15px">ByLayer</div></div>
<div class="t" style="left:942px;top:45.5px">特性</div>
<div class="ar2" style="left:972px;top:50.3px"></div>
</div>
<div id="gap"><div class="hl"></div><div class="base"></div>
<svg class="ico" style="left:0;top:0" width="480" height="30" viewBox="0 62 480 30">
<defs><linearGradient id="tg" x1="0" y1="0" x2="0" y2="1"><stop offset="0" stop-color="#606060"/><stop offset="1" stop-color="#4b4b4b"/></linearGradient><linearGradient id="ta" x1="0" y1="0" x2="0" y2="1"><stop offset="0" stop-color="#7c7c7c"/><stop offset="1" stop-color="#666"/></linearGradient></defs>
<path d="M-20 88.5V78C-20 70 -17 66.2 -10 66.2H55.599999999999994C62.599999999999994 66.2 65.6 70 65.6 78V88.5Z" fill="url(#tg)"/>
<path d="M67.4 88.5V78C67.4 70 70.4 66.2 77.4 66.2H178.6C185.6 66.2 188.6 70 188.6 78V88.5Z" fill="url(#tg)"/>
<path d="M190.4 88.5V78C190.4 70 193.4 66.2 200.4 66.2H303C310 66.2 313 70 313 78V88.5Z" fill="url(#tg)"/>
<path d="M308.5 88.5C315.5 88.5 313.5 66.2 321.5 66.2H432C440 66.2 438 88.5 445 88.5Z" fill="url(#ta)"/>
<path d="M443 71H455Q465 71 465.3 85H453Q445 85 443 71Z" fill="#5c5c5c"/>
<path d="M450 77.8H458M454 73.8V81.8" stroke="#e0e0e0" stroke-width="1.8"/>
<path d="M170.5 75l6 6M170.5 81l6-6" stroke="#3d3d3d" stroke-width="1.8"/>
<path d="M293.5 75l6 6M293.5 81l6-6" stroke="#3d3d3d" stroke-width="1.8"/>
<path d="M416 75l6 6M416 81l6-6" stroke="#484848" stroke-width="1.8"/>
</svg>
<div class="t" style="left:77.5px;top:8.8px;color:#b2b2b2">装配</div>
<div class="t" style="left:200px;top:8.8px;color:#b2b2b2">行星齿轮</div>
<div class="t" style="left:322.8px;top:8.8px;color:#fff">行星轮架盖</div>
</div>
<div id="cmd1"></div>
<div class="cl" style="top:652px">Autodesk DWG<b>。</b> <i> </i><b>此文件上次由</b> Autodesk <b>应用程序或</b> Autodesk <b>许可的应用程序保存，</b></div>
<div class="cl" style="top:666.8px"><b>是可靠的</b> DWG<b>。</b></div>
<div class="cp" style="top:685.3px"><span>命令:</span></div>
<div class="cp" style="top:705px"><span>命令:</span></div>
<div id="hscroll"></div>
</body></html>
